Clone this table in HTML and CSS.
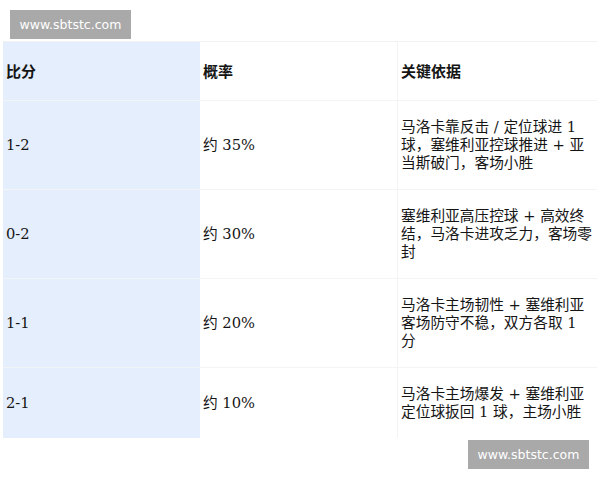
FILE: index.html
```html
<!DOCTYPE html>
<html lang="zh-CN">
<head>
<meta charset="utf-8">
<link rel="stylesheet" href="styles.css">
</head>
<body>
<div class="mark mark-top">www.sbtstc.com</div>
<table class="odds">
  <thead>
    <tr>
      <th class="c1">比分</th>
      <th class="c2">概率</th>
      <th class="c3">关键依据</th>
    </tr>
  </thead>
  <tbody>
    <tr>
      <td class="c1">1-2</td>
      <td class="c2">约 35%</td>
      <td class="c3">马洛卡靠反击 / 定位球进 1 球，塞维利亚控球推进 + 亚当斯破门，客场小胜</td>
    </tr>
    <tr>
      <td class="c1">0-2</td>
      <td class="c2">约 30%</td>
      <td class="c3">塞维利亚高压控球 + 高效终结，马洛卡进攻乏力，客场零封</td>
    </tr>
    <tr>
      <td class="c1">1-1</td>
      <td class="c2">约 20%</td>
      <td class="c3">马洛卡主场韧性 + 塞维利亚客场防守不稳，双方各取 1 分</td>
    </tr>
    <tr>
      <td class="c1">2-1</td>
      <td class="c2">约 10%</td>
      <td class="c3">马洛卡主场爆发 + 塞维利亚定位球扳回 1 球，主场小胜</td>
    </tr>
  </tbody>
</table>
<div class="bottom">
  <div class="mark">www.sbtstc.com</div>
</div>
</body>
</html>
```

FILE: styles.css
```css
html, body {
  margin: 0;
  padding: 0;
  background: #ffffff;
}
body {
  width: 600px;
  height: 480px;
  overflow: hidden;
  font-family: "DejaVu Serif", "Noto Sans CJK SC", serif;
  color: #151515;
}
.mark {
  display: inline-flex;
  align-items: center;
  justify-content: center;
  width: 121px;
  height: 29px;
  background: #a9a9a9;
  color: #ffffff;
  font-family: "DejaVu Sans", "Noto Sans", sans-serif;
  font-size: 12.5px;
}
.mark-top {
  margin: 10px 0 0 10px;
}
.odds {
  margin: 2px 0 0 3px;
  width: 594px;
  border-collapse: collapse;
  table-layout: fixed;
  font-size: 14.7px;
  line-height: 18px;
}
.odds th, .odds td {
  text-align: left;
  vertical-align: middle;
  padding: 17px 3px;
  border-top: 1px solid #f3f4f6;
}
.odds th {
  padding: 20px 3px;
  font-family: "Noto Sans CJK SC", sans-serif;
  font-weight: 700;
  font-size: 15px;
  border-top: 1px solid #f2f2f2;
}
.odds .c1 {
  width: 191px;
  background: #e5eefc;
}
.odds .c2 {
  width: 191px;
}
.odds .c3 {
  padding-right: 4px;
  border-left: 1px solid #f3f4f6;
}
.bottom {
  display: flex;
  justify-content: flex-end;
  padding: 2px 11px 0 0;
}
```
